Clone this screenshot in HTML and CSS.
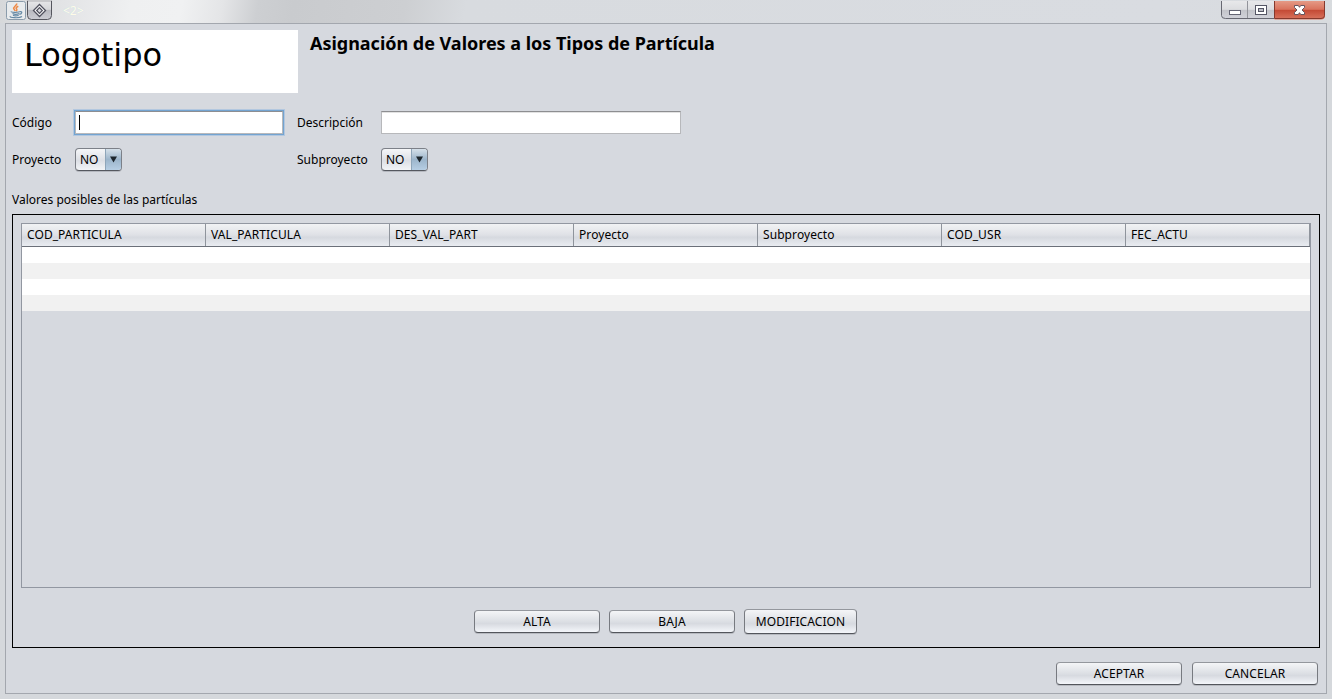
FILE: index.html
```html
<!DOCTYPE html>
<html lang="es">
<head>
<meta charset="utf-8">
<title>Asignación de Valores</title>
<link rel="stylesheet" href="styles.css">
</head>
<body>
<div class="window">
  <header class="titlebar">
    <svg class="java-icon" width="20" height="20" viewBox="0 0 20 20">
      <rect x=".5" y="1.5" width="19" height="18" rx="2" fill="#e8ebed" stroke="#8b9cab"/>
      <path d="M10.8 3.5C11 6 6.5 6.500 8 9.200L9.200 10.900M12.300 6.200C9.500 7.500 9.700 8.300 10.800 9.300 11.200 10 10.500 10.700 10 11.100" fill="none" stroke="#ee8844" stroke-width="1.5"/>
      <path d="M5.500 11.500c-2 .8 7 1.300 8.800.1M6.500 13.500c1.500.8 5 .8 6.800 0M7 15.200c1.500.7 4 .7 5.700 0M4.500 16.300c-2.300 1.400 9 2.300 11.500.2M14 11.700c2.500-.6 2.300 2-.5 2.700" fill="none" stroke="#668aa5" stroke-width="1.200"/>
    </svg>
    <svg class="menu-icon" width="25" height="20" viewBox="0 0 25 20">
      <defs><linearGradient id="g" x2="0" y2="1"><stop stop-color="#e6e6e8"/><stop offset=".45" stop-color="#d6d7da"/><stop offset=".5" stop-color="#b9bac0"/><stop offset="1" stop-color="#cccdd4"/></linearGradient></defs>
      <path d="M.5 1V15.500Q.5 19.500 4.500 19.500H20.500Q24.500 19.500 24.500 15.500V1Z" fill="url(#g)" stroke="#55565e"/>
      <path d="M1 1H24" stroke="#f5f5f5"/>
      <path d="M12.500 4.500L18.500 10.500L12.500 16.500L6.500 10.500Z" fill="#fff" stroke="#50515e" stroke-width="1.300"/>
      <path d="M12.500 7.700L15.300 10.500L12.500 13.300L9.700 10.500Z" fill="#d6d7dc" stroke="#50515e" stroke-width="1.200"/>
    </svg>
    <span class="window-title">&lt;2&gt;</span>
    <svg class="controls" width="105" height="20" viewBox="0 0 105 20">
      <defs>
        <linearGradient id="r" x2="0" y2="1"><stop stop-color="#e59a86"/><stop offset=".45" stop-color="#d9735d"/><stop offset=".5" stop-color="#c44a35"/><stop offset="1" stop-color="#da7660"/></linearGradient>
        <linearGradient id="w" x2="0" y2="1"><stop stop-color="#e8e8ea"/><stop offset=".45" stop-color="#dcdde0"/><stop offset=".5" stop-color="#c3c4ca"/><stop offset="1" stop-color="#d3d4dc"/></linearGradient>
      </defs>
      <path d="M.5 1V15.500Q.5 19.500 4.500 19.500H53.500V1Z" fill="url(#w)"/>
      <path d="M53.500 1V19.500H100Q104 19.500 104 15.500V1Z" fill="url(#r)"/>
      <path d="M.5 1V15.500Q.5 18.500 4.500 18.500H53" fill="none" stroke="#676872"/>
      <path d="M26.500 1V18" stroke="#92939a"/>
      <path d="M53.500 1V18.500H100Q103.500 18.500 103.500 15.500V1" fill="none" stroke="#85392d"/>
      <rect x="8.500" y="10.500" width="11" height="4" fill="#fff" stroke="#646574"/>
      <rect x="34.500" y="5.500" width="11" height="9" fill="#fff" stroke="#555665"/>
      <rect x="37.500" y="8.500" width="5" height="3" fill="#bbbcc4" stroke="#555665"/>
      <path d="M73.500 5.500H77.300L78.500 7.300L79.700 5.500H83.500V7.500L81 10L83.500 12.500V14.500H79.700L78.500 12.700L77.300 14.500H73.500V12.500L76 10L73.500 7.500Z" fill="#fff" stroke="#65545f"/>
    </svg>
  </header>
  <main class="content">
    <div class="heading">
      <div class="logo">Logotipo</div>
      <h1 class="title">Asignación de Valores a los Tipos de Partícula</h1>
    </div>
    <div class="form">
      <label>Código</label><div class="field focused"><i class="caret"></i></div>
      <label>Descripción</label><div class="field"></div>
      <label>Proyecto</label><div class="combo"><span>NO</span><b><svg width="8" height="7"><path d="M0 .5H7L3.500 6.500Z" fill="#1d262d"/></svg></b></div>
      <label>Subproyecto</label><div class="combo second"><span>NO</span><b><svg width="8" height="7"><path d="M0 .5H7L3.500 6.500Z" fill="#1d262d"/></svg></b></div>
    </div>
    <div class="caption">Valores posibles de las partículas</div>
    <section class="panel">
      <div class="table">
        <div class="thead"><span>COD_PARTICULA</span><span>VAL_PARTICULA</span><span>DES_VAL_PART</span><span>Proyecto</span><span>Subproyecto</span><span>COD_USR</span><span>FEC_ACTU</span></div>
        <div class="row"></div><div class="row"></div><div class="row"></div><div class="row"></div>
      </div>
      <div class="actions">
        <button class="btn">ALTA</button><button class="btn">BAJA</button><button class="btn modify">MODIFICACION</button>
      </div>
    </section>
    <footer class="footer"><button class="btn">ACEPTAR</button><button class="btn">CANCELAR</button></footer>
  </main>
</div>
</body>
</html>
```
FILE: styles.css
```css
* { box-sizing: border-box; }
body { margin: 0; font: 12px/16px "Noto Sans", sans-serif; color: #000; background: #d6d9df; }
.window {
  width: 1332px; height: 699px; padding: 0 5px 5px; overflow: hidden;
  background:
    linear-gradient(100deg, #d6d8da 0, #e2e3e5 60px, #eff0f1 130px, #f0f1f2 180px, #e4e5e7 220px, #cdcfd2 255px, #c9cbce 290px, #cdcfd2 400px, #d8dbdf 460px, #d9dce1 1150px, #d8dbde 1332px) 0 0 / 100% 23px no-repeat,
    #d5d8dc;
}
.titlebar { height: 23px; display: flex; align-items: flex-start; padding-left: 1px; }
.java-icon { display: block; }
.menu-icon { display: block; margin-left: 1px; }
.window-title { margin: 3px 0 0 11px; color: #fffbe6; text-shadow: 0 0 1px #bfe0f2; }
.controls { display: block; margin-left: auto; margin-right: 1px; }
.content { height: 671px; border: 1px solid #a3a7ae; background: #d6d9df; padding: 6px; }
.heading { display: flex; gap: 12px; height: 63px; }
.logo { width: 286px; height: 63px; padding: 5px 0 0 12px; background: #fff; font: 32px/40px "DejaVu Sans", sans-serif; }
.title { margin: 1px 0 0; font-size: 18px; line-height: 24px; font-weight: 700; white-space: nowrap; letter-spacing: -.02px; }
.form {
  display: grid; grid-template-columns: 61px 224px 83px 302px; grid-template-rows: 28px 28px;
  row-gap: 9px; margin-top: 15px; align-items: center;
}
.form label { padding-top: 2px; }
.field { width: 300px; height: 23px; margin-left: 1px; border: 1px solid #b7b8bb; border-top: 1px solid #8d8e91; background: #fff; box-shadow: inset 0 1px #e2e2e2; }
.focused { width: 208px; margin-left: 2px; box-shadow: 0 0 0 1px #73a4d1, 0 0 0 2px #b2c7df; }
.caret { display: block; width: 1px; height: 15px; margin: 3px 0 0 3px; background: #000; }
.combo {
  display: flex; width: 47px; height: 23px; margin-left: 2px; overflow: hidden;
  border: 1px solid #7c8088; border-bottom-color: #55585f; border-radius: 4px;
  background: linear-gradient(#f5f6f8, #dcdfe5 55%, #f2f4f7); box-shadow: 0 1px #b5b8bf;
}
.second { margin-left: 1px; }
.combo span { width: 29px; padding: 3px 0 0 4px; }
.combo b { flex: 1; display: grid; place-items: center; border-left: 1px solid #8ea5b9; background: linear-gradient(#d5e0e9, #9cb5cb 50%, #b6cee4); }
.combo svg { display: block; }
.caption { margin-top: 15px; height: 22px; line-height: 16px; padding-top: 4px; }
.panel { width: 1308px; height: 434px; border: 1px solid #000; margin-top: 4px; padding: 8px; }
.table { width: 1290px; height: 365px; border: 1px solid #9297a1; }
.thead { height: 23px; display: flex; border-bottom: 1px solid #6b7079; background: linear-gradient(#f1f2f4, #dfe1e6 50%, #d6d9df 60%, #e9ecf1); letter-spacing: .08px; }
.thead span { width: 184px; padding: 3px 0 0 5px; border-right: 1px solid #8f949c; }
.row { height: 16px; background: #fff; }
.row:nth-child(odd) { background: #f1f1f1; }
.actions { display: flex; align-items: center; height: 25px; margin: 21px 0 0 453px; gap: 9px; }
.btn {
  width: 126px; height: 23px; padding: 0; border: 1px solid #777a80; border-top-color: #94979d; border-bottom-color: #53565c; border-radius: 4px;
  font: 12px/16px "Noto Sans", sans-serif; color: #000; text-align: center; letter-spacing: .08px;
  background: linear-gradient(#f4f5f7, #dcdfe4 50%, #d7dae0 60%, #f4f6fa); box-shadow: 0 1px #b7bac0;
}
.modify { height: 25px; width: 113px; }
.footer { display: flex; justify-content: flex-end; gap: 10px; margin-top: 14px; padding-right: 2px; }
```
